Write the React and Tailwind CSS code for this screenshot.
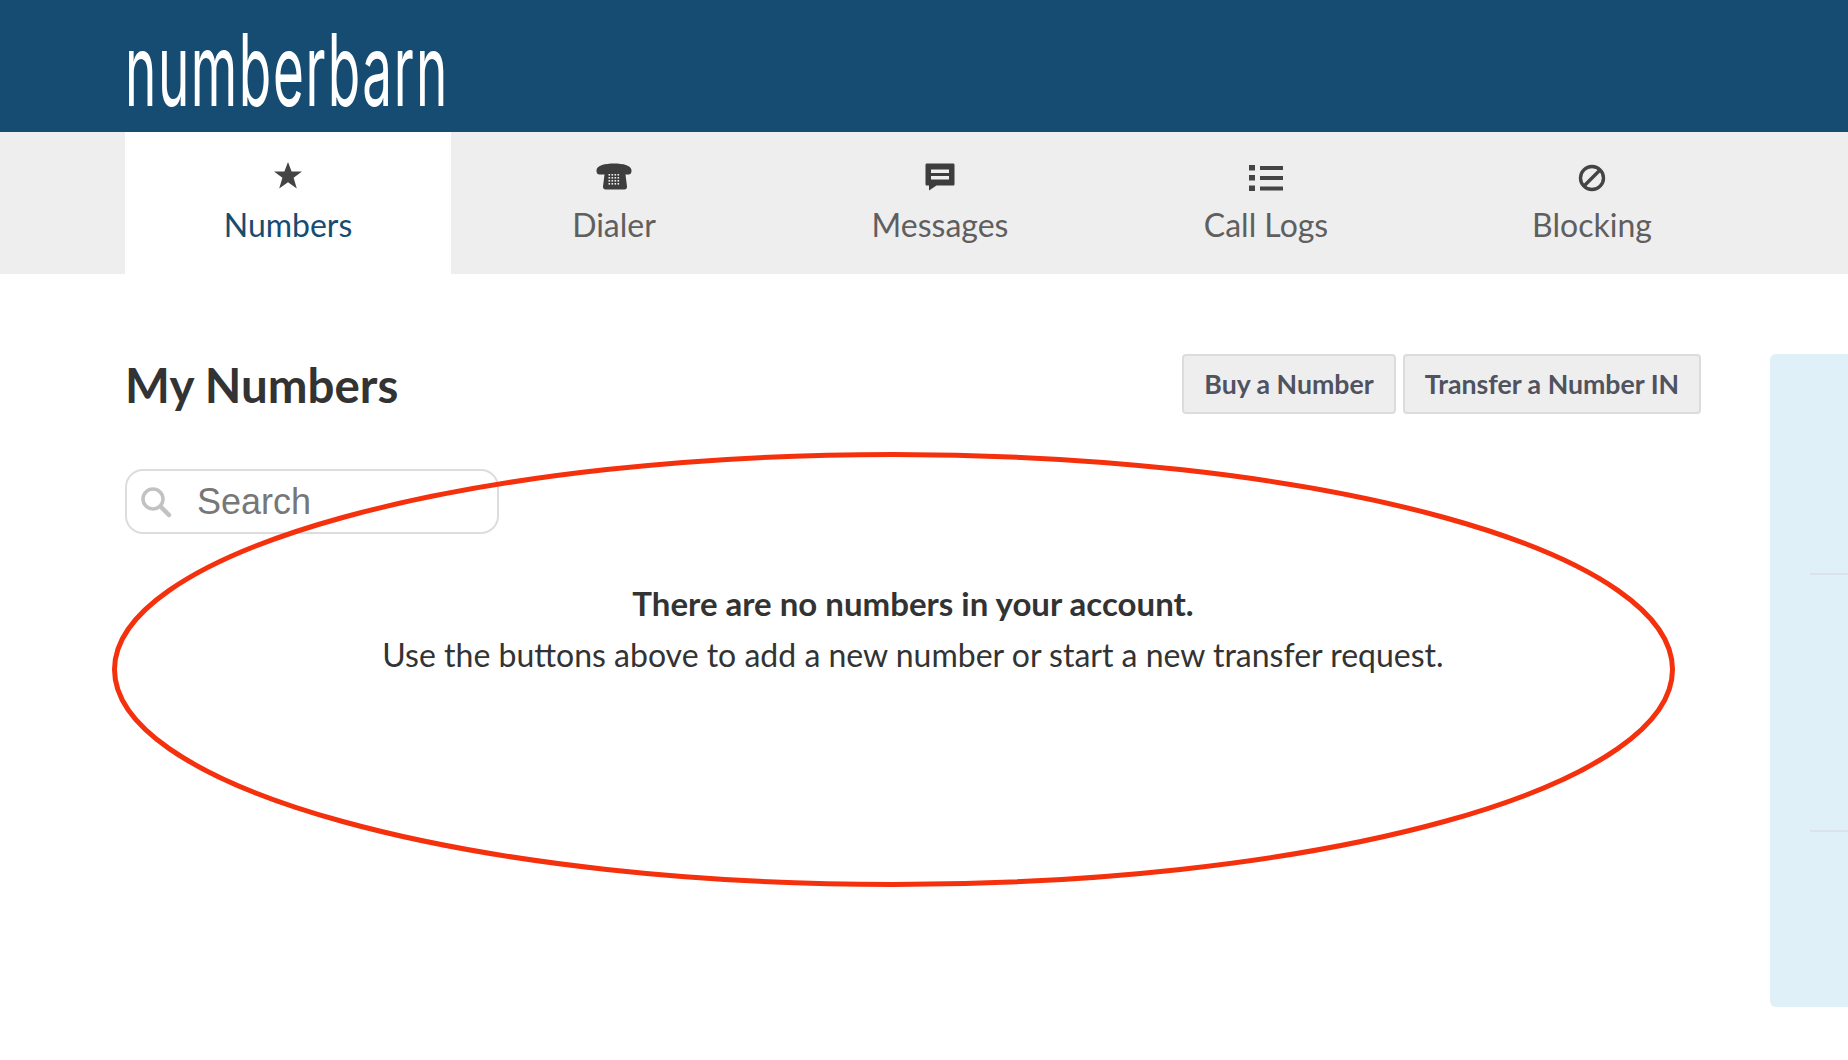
const sans = "font-['Lato','Noto_Sans',sans-serif]";

function Star() {
  return (
    <svg width="28" height="27" viewBox="0 0 28 27" className="fill-[#444444]">
      <path d="M14 0l3.600 9.500h10.400l-8.400 6.200 3.200 10.800-8.800-6.300-8.800 6.300 3.200-10.800-8.400-6.200h10.400z" />
    </svg>
  );
}

function Phone() {
  return (
    <svg width="36" height="27" viewBox="0 0 36 27">
      <path d="M0.500 7C1 2.500 9 0.500 18 0.500S35 2.500 35.500 7c.2 3-1 4.500-3 4.500h-3l1.500 12c.2 2-1 3-2.500 3H9.500c-1.500 0-2.700-1-2.500-3l1.500-12h-5c-2 0-3.200-1.500-3-4.500z" fill="#3d3d3d" />
      <g fill="#eeeeee">
        {[13.500, 16.500, 19.500, 22.500].map((x) =>
          [11, 14, 17, 20].map((y) => <rect key={`${x}-${y}`} x={x - 1} y={y} width="1.600" height="1.600" />)
        )}
      </g>
    </svg>
  );
}

function Chat() {
  return (
    <svg width="30" height="28" viewBox="0 0 30 28">
      <path d="M2 0.500h26c1 0 1.500.5 1.500 1.500v19c0 1-.5 1.500-1.500 1.500H11.500L4 27.500v-5H2c-1 0-1.500-.5-1.500-1.500V2C.5 1 1 .5 2 .5z" fill="#3d3d3d" />
      <rect x="6" y="6.500" width="18" height="3.500" fill="#eeeeee" />
      <rect x="6" y="13" width="18" height="3.500" fill="#eeeeee" />
    </svg>
  );
}

function ListIcon() {
  return (
    <svg width="34" height="28" viewBox="0 0 34 28" fill="#444444">
      <rect x="0" y="1" width="6" height="5.500" />
      <rect x="0" y="11" width="6" height="5.500" />
      <rect x="0" y="21.500" width="6" height="5.500" />
      <rect x="11" y="2" width="23" height="4" />
      <rect x="11" y="12" width="23" height="4" />
      <rect x="11" y="22.500" width="23" height="4" />
    </svg>
  );
}

function Ban() {
  return (
    <svg width="28" height="28" viewBox="0 0 28 28" fill="none" stroke="#444444" strokeWidth="3.400">
      <circle cx="14" cy="14" r="11.500" />
      <path d="M6.500 21.500L21.500 6.500" />
    </svg>
  );
}

const tabs = [
  { label: "Numbers", Icon: Star, active: true, shift: "-translate-y-[1px]" },
  { label: "Dialer", Icon: Phone, shift: "" },
  { label: "Messages", Icon: Chat, shift: "translate-y-[1px]" },
  { label: "Call Logs", Icon: ListIcon, shift: "translate-y-[2px]" },
  { label: "Blocking", Icon: Ban, shift: "translate-y-[2px]" },
];

export default function App() {
  return (
    <div className={`relative h-[1060px] overflow-hidden bg-white ${sans}`}>
      <header className="h-[132px] bg-[#164c72] pl-[125px]">
        <div className="w-[320px] origin-top-left scale-x-[0.53] whitespace-nowrap pt-[20px] font-['Inter',sans-serif] text-[100px] leading-[100px] font-normal tracking-[3px] text-white">
          numberbarn
        </div>
      </header>

      <nav className="flex h-[142px] bg-[#eeeeee] pl-[125px]">
        {tabs.map(({ label, Icon, active, shift }) => (
          <div
            key={label}
            className={`flex w-[326px] flex-col items-center pt-[29px] ${active ? "bg-white" : ""}`}
          >
            <div className={`flex h-[30px] items-center ${shift}`}>
              <Icon />
            </div>
            <div
              className={`mt-[10px] text-[32px] leading-[48px] ${active ? "text-[#164c72]" : "text-[#5f5f5f]"}`}
            >
              {label}
            </div>
          </div>
        ))}
      </nav>

      <main className="flex pl-[125px] pt-[80px]">
        <section className="w-[1576px]">
          <div className="flex items-start justify-between">
            <h1 className="pt-[1px] text-[47.500px] leading-[60px] font-bold text-[#333333]">My Numbers</h1>
            <div className="flex gap-[7px]">
              <button className="h-[60px] w-[214px] rounded-[4px] border-2 border-[#dcdcdc] bg-[#eeeeee] text-[26.700px] font-bold text-[#50535f]">
                Buy a Number
              </button>
              <button className="h-[60px] w-[298px] rounded-[4px] border-2 border-[#dcdcdc] bg-[#eeeeee] text-[26.700px] font-bold text-[#50535f]">
                Transfer a Number IN
              </button>
            </div>
          </div>

          <div className="mt-[54px] flex h-[65px] w-[374px] items-center rounded-[18px] border-2 border-[#dddddd] pl-[13px]">
            <svg width="32" height="32" viewBox="0 0 32 32" fill="none" stroke="#c2c2c2">
              <circle cx="13" cy="13" r="10" strokeWidth="3.500" />
              <path d="M20.500 20.500L29 29" strokeWidth="4.500" strokeLinecap="round" />
            </svg>
            <span className="ml-[25px] font-['Liberation_Sans',sans-serif] text-[36px] text-[#777777]">Search</span>
          </div>

          <div className="mt-[44px] text-center text-[32px] leading-[51px] text-[#333333]">
            <p className="text-[33px] font-bold">There are no numbers in your account.</p>
            <p>Use the buttons above to add a new number or start a new transfer request.</p>
          </div>
        </section>

        <aside className="ml-[69px] flex h-[653px] flex-1 flex-col rounded-l-[6px] bg-[#dff0f9] pl-[40px] pt-[219px]">
          <div className="h-[2px] bg-[#d9e3e9]" />
          <div className="mt-[255px] h-[2px] bg-[#d9e3e9]" />
        </aside>
      </main>

      <svg className="pointer-events-none absolute left-0 top-0" width="1848" height="1060" fill="none">
        <ellipse cx="893.500" cy="669.500" rx="779" ry="215" stroke="#f5300d" strokeWidth="5" />
      </svg>
    </div>
  );
}
